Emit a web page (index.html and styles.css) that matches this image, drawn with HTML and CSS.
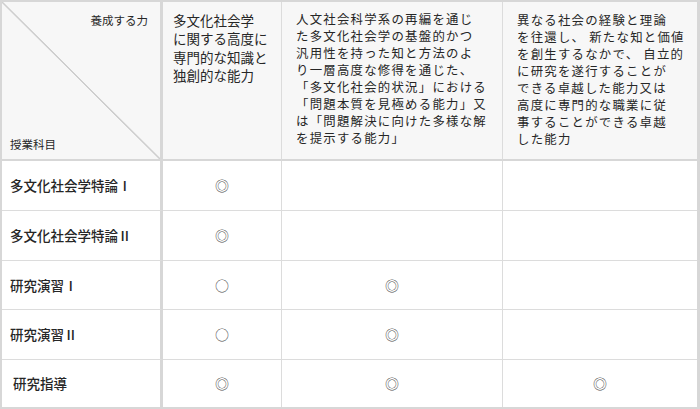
FILE: index.html
```html
<!DOCTYPE html>
<html lang="ja">
<head>
<meta charset="utf-8">
<title>養成する力と授業科目</title>
<link rel="stylesheet" href="styles.css">
</head>
<body>
<div class="matrix">
  <div class="cell head corner">
    <span class="corner-top">養成する力</span>
    <span class="corner-bottom">授業科目</span>
  </div>
  <div class="cell head h2">
    <span class="ln">多文化社会学</span>
    <span class="ln">に関する高度に</span>
    <span class="ln">専門的な知識と</span>
    <span class="ln">独創的な能力</span>
  </div>
  <div class="cell head h3">
    <span class="ln">人文社会科学系の再編を通じ</span>
    <span class="ln">た多文化社会学の基盤的かつ</span>
    <span class="ln">汎用性を持った知と方法のよ</span>
    <span class="ln">り一層高度な修得を通じた、</span>
    <span class="ln">「多文化社会的状況」における</span>
    <span class="ln">「問題本質を見極める能力」又</span>
    <span class="ln">は「問題解決に向けた多様な解</span>
    <span class="ln">を提示する能力」</span>
  </div>
  <div class="cell head h4 last-col">
    <span class="ln">異なる社会の経験と理論</span>
    <span class="ln">を往還し、 新たな知と価値</span>
    <span class="ln">を創生するなかで、 自立的</span>
    <span class="ln">に研究を遂行することが</span>
    <span class="ln">できる卓越した能力又は</span>
    <span class="ln">高度に専門的な職業に従</span>
    <span class="ln">事することができる卓越</span>
    <span class="ln">した能力</span>
  </div>

  <div class="cell label">多文化社会学特論Ⅰ</div>
  <div class="cell mark">◎</div>
  <div class="cell mark"></div>
  <div class="cell mark last-col"></div>

  <div class="cell label">多文化社会学特論Ⅱ</div>
  <div class="cell mark">◎</div>
  <div class="cell mark"></div>
  <div class="cell mark last-col"></div>

  <div class="cell label">研究演習Ⅰ</div>
  <div class="cell mark">○</div>
  <div class="cell mark">◎</div>
  <div class="cell mark last-col"></div>

  <div class="cell label">研究演習Ⅱ</div>
  <div class="cell mark">○</div>
  <div class="cell mark">◎</div>
  <div class="cell mark last-col"></div>

  <div class="cell label last-row indent">研究指導</div>
  <div class="cell mark last-row">◎</div>
  <div class="cell mark last-row">◎</div>
  <div class="cell mark last-row last-col">◎</div>
</div>
</body>
</html>
```

FILE: styles.css
```css
* {
  box-sizing: border-box;
}

html, body {
  margin: 0;
  padding: 0;
  background: #ffffff;
}

body {
  font-family: "Noto Sans CJK JP", "DejaVu Sans", sans-serif;
  color: #262626;
}

.matrix {
  display: grid;
  grid-template-columns: 161px 119px 221px 194px;
  grid-template-rows: 159px 50px 50px 49px 50px 47px;
  width: 700px;
  height: 409px;
  border-top: 2px solid #d7d7d7;
  border-left: 2px solid #d7d7d7;
  border-right: 3px solid #d7d7d7;
  border-bottom: 2px solid #d7d7d7;
}

.cell {
  border-right: 1px solid #dcdcdc;
  border-bottom: 1px solid #dcdcdc;
  background: #ffffff;
}

.cell.last-col {
  border-right: none;
}

.cell.last-row {
  border-bottom: none;
}

.head {
  background: #f7f7f7;
  border-bottom: 2px solid #d7d7d7;
  font-size: 13.5px;
  display: flex;
  flex-direction: column;
}

.ln {
  display: block;
  white-space: nowrap;
}

.corner,
.label {
  border-right: 3px solid #d7d7d7;
}

.corner {
  background:
    linear-gradient(to top right,
      transparent calc(50% - 1px),
      #cfcfcf calc(50% - 0.5px),
      #cfcfcf calc(50% + 0.5px),
      transparent calc(50% + 1px)),
    #f7f7f7;
  justify-content: space-between;
  padding: 11px 12px 8px 8px;
  font-size: 11.5px;
  line-height: 14px;
}

.corner-top {
  align-self: flex-end;
}

.corner-bottom {
  align-self: flex-start;
}

.h2 {
  padding: 9px 6px 0 10px;
}

.h2 .ln {
  height: 18.3px;
  line-height: 18.3px;
}

.h3,
.h4 {
  font-size: 12.4px;
  letter-spacing: 1.25px;
}

.h3 {
  padding: 9px 6px 0 14px;
}

.h4 {
  padding: 10px 6px 0 14px;
}

.h3 .ln,
.h4 .ln {
  height: 17px;
  line-height: 17px;
}

.label {
  display: flex;
  align-items: center;
  padding: 0 0 1px 8px;
  font-size: 13.5px;
  font-weight: 500;
}

.label.indent {
  padding-left: 11px;
}

.mark {
  display: flex;
  align-items: center;
  justify-content: center;
  font-size: 14px;
  color: #4d4d4d;
  padding-bottom: 1px;
}
```
